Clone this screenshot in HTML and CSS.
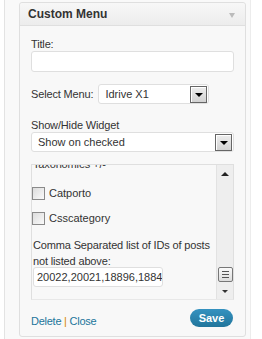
FILE: index.html
```html
<!DOCTYPE html>
<html>
<head>
    <meta name="viewport" content="width=device-width, initial-scale=1.0">
    <title>Custom Menu</title>
    <link rel="stylesheet" href="styles.css">
</head>
<body>
  <div class="sidebar">
    <div class="widget">
      <div class="widget-top">
          <h3 class="widget-title">Custom Menu</h3>
          <span class="widget-arrow"></span>
      </div>
      <div class="widget-inside">
          <label class="lbl">Title:</label>
          <div class="textbox"></div>

          <div class="menu-row">
              <label class="lbl">Select Menu:</label>
              <div class="dropdown dropdown-small">
                  <span class="dropdown-value">Idrive X1</span>
                  <span class="dropdown-btn"><i class="tri-down"></i></span>
              </div>
          </div>

          <label class="lbl">Show/Hide Widget</label>
          <div class="dropdown">
              <span class="dropdown-value">Show on checked</span>
              <span class="dropdown-btn"><i class="tri-down"></i></span>
          </div>

          <div class="scroll-box">
              <div class="scroll-content">
                  <p class="tax-title">Taxonomies +/-</p>
                  <div class="check-row"><span class="checkbox"></span>Catporto</div>
                  <div class="check-row"><span class="checkbox"></span>Csscategory</div>
                  <p class="ids-label">Comma Separated list of IDs of posts<br>not listed above:</p>
                  <div class="textbox ids-input">20022,20021,18896,18845</div>
              </div>
              <div class="scrollbar">
                  <i class="tri-up-small"></i>
                  <span class="thumb"><b></b><b></b><b></b></span>
                  <i class="tri-down-small"></i>
              </div>
          </div>

          <div class="widget-control">
              <span class="links"><a href="#">Delete</a> <span class="sep">|</span> <a href="#">Close</a></span>
              <button class="save-btn">Save</button>
          </div>
      </div>
    </div>
  </div>
</body>
</html>
```

FILE: styles.css
```css
body {
    margin: 0;
    background-color: #fff;
    font-family: "Liberation Sans", Arial, sans-serif;
    font-size: 11px;
    letter-spacing: -0.15px;
    color: #333;
}

/* columna lateral */
.sidebar {
    margin-left: 4px;
    width: 247px;
    height: 339px;
    padding: 2px 4px 0 14px;
    box-sizing: border-box;
    background-color: #f9f9f9;
    border-left: 1px solid #e3e3e3;
    border-right: 1px solid #ececec;
}

.widget {
    width: 227px;
    border: 1px solid #dfdfdf;
    border-radius: 3px;
    background-color: #f8f8f8;
    box-sizing: border-box;
}

.widget-top {
    height: 22px;
    display: flex;
    align-items: center;
    justify-content: space-between;
    padding: 0 10px 0 8px;
    background: linear-gradient(#f7f7f7, #ececec);
    border-bottom: 1px solid #dfdfdf;
    border-radius: 3px 3px 0 0;
}

.widget-title {
    margin: 0;
    font-size: 12px;
    font-weight: bold;
    letter-spacing: 0;
    color: #333;
}

.widget-arrow {
    width: 0;
    height: 0;
    border-left: 3px solid transparent;
    border-right: 3px solid transparent;
    border-top: 5px solid #bbb;
    margin-top: 2px;
}

.widget-inside {
    padding: 11px 11px 0 11px;
}

.lbl {
    display: block;
    line-height: 14px;
}

.textbox {
    height: 19px;
    background-color: #fff;
    border: 1px solid #dfdfdf;
    border-radius: 3px;
}

/* selector de menu */
.menu-row {
    display: flex;
    align-items: center;
    gap: 5px;
    margin-top: 12px;
    margin-bottom: 14px;
}

.dropdown {
    height: 20px;
    box-sizing: border-box;
    display: flex;
    align-items: center;
    justify-content: space-between;
    background-color: #fff;
    border: 1px solid #dfdfdf;
    border-radius: 3px;
    padding: 0 1px 0 6px;
    letter-spacing: 0;
}

.dropdown-small {
    width: 111px;
}

.dropdown-btn {
    width: 17px;
    height: 17px;
    box-sizing: border-box;
    border: 1px solid #666;
    box-shadow: inset 1px 1px 0 #fff;
    background: linear-gradient(#eee, #d2d2d2);
    display: flex;
    align-items: center;
    justify-content: center;
}

.tri-down {
    width: 0;
    height: 0;
    border-left: 4px solid transparent;
    border-right: 4px solid transparent;
    border-top: 4px solid #000;
    margin-top: 2px;
}

/* caja con scroll */
.scroll-box {
    margin-top: 12px;
    height: 136px;
    box-sizing: border-box;
    display: flex;
    border: 1px solid #dfdfdf;
    border-bottom-color: #e8e8e8;
    overflow: hidden;
}

.scroll-content {
    flex: 1;
    display: flex;
    flex-direction: column;
    align-items: flex-start;
}

.tax-title {
    margin: -8px 0 4px 1px;
    line-height: 14px;
}

.check-row {
    display: flex;
    align-items: center;
    gap: 4px;
    margin-top: 12px;
    line-height: 13px;
    letter-spacing: 0;
}

.checkbox {
    width: 13px;
    height: 13px;
    box-sizing: border-box;
    border: 1px solid #8a8a8a;
    background: linear-gradient(135deg, #dcdcdc, #fafafa);
}

.ids-label {
    margin: 12px 0 0 1px;
    line-height: 16px;
}

.ids-input {
    width: 130px;
    height: 20px;
    box-sizing: border-box;
    margin: -2px 0 0 1px;
    padding-left: 3px;
    line-height: 18px;
    letter-spacing: 0;
    white-space: nowrap;
    overflow: hidden;
}

.scrollbar {
    width: 16px;
    background-color: #eee;
    border-left: 1px solid #e2e2e2;
    display: flex;
    flex-direction: column;
    align-items: center;
}

.tri-up-small {
    width: 0;
    height: 0;
    border-left: 4px solid transparent;
    border-right: 4px solid transparent;
    border-bottom: 4px solid #222;
    margin-top: 7px;
}

.thumb {
    width: 15px;
    height: 15px;
    box-sizing: border-box;
    margin-top: 91px;
    border: 1px solid #777;
    border-radius: 2px;
    background: linear-gradient(#fafafa, #ddd);
    display: flex;
    flex-direction: column;
    align-items: center;
    justify-content: center;
    gap: 2px;
}

.thumb b {
    display: block;
    width: 7px;
    height: 1px;
    background-color: #555;
}

.tri-down-small {
    width: 0;
    height: 0;
    border-left: 3px solid transparent;
    border-right: 3px solid transparent;
    border-top: 3px solid #333;
    margin-top: 8px;
}

/* pie del widget */
.widget-control {
    display: flex;
    justify-content: space-between;
    align-items: flex-start;
    margin-top: 9px;
    height: 18px;
    padding-bottom: 9px;
}

.links {
    line-height: 14px;
    margin-top: 5px;
    letter-spacing: -0.25px;
}

.links a {
    color: #21759b;
    text-decoration: none;
}

.sep {
    color: #d98500;
}

.save-btn {
    width: 43px;
    height: 18px;
    border: none;
    border-radius: 11px;
    background: linear-gradient(#3592c0, #21759b);
    color: #fff;
    font-family: "Liberation Sans", Arial, sans-serif;
    font-weight: bold;
    font-size: 11px;
    padding: 0;
    margin-right: 1px;
}
```
